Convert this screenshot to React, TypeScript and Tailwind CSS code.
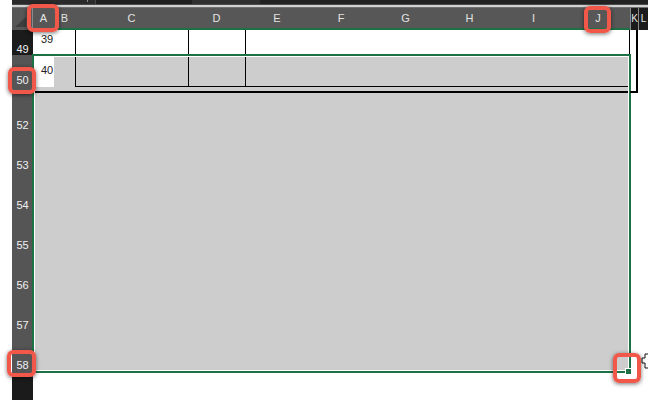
import React from 'react';

const columns = [
  { label: 'A', w: 'w-[21px]' },
  { label: 'B', w: 'w-[21px]' },
  { label: 'C', w: 'w-[113px]' },
  { label: 'D', w: 'w-[57px]' },
  { label: 'E', w: 'w-[64px]' },
  { label: 'F', w: 'w-[64px]' },
  { label: 'G', w: 'w-[65px]' },
  { label: 'H', w: 'w-[63px]' },
  { label: 'I', w: 'w-[65px]' },
  { label: 'J', w: 'w-[64px]' },
];

const tallRows = ['52', '53', '54', '55', '56', '57'];

const Callout = ({ className }: { className: string }) => (
  <div
    className={`absolute border-[4px] border-[#f2584a] rounded-[6px] shadow-[0_1px_4px_rgba(0,0,0,0.55)] ${className}`}
  />
);

const App: React.FC = () => {
  return (
    <div className="relative w-[648px] h-[400px] bg-white flex overflow-hidden font-['Liberation_Sans',Arial,sans-serif]">
      {/* white gutter */}
      <div className="w-[12px] shrink-0" />

      <div className="w-[636px] flex flex-col">
        {/* app top strip */}
        <div className="h-[8px] flex flex-col">
          <div className="h-[4px] flex">
            <div className="w-[83px] bg-[#2a2a2a] flex justify-end pr-[7px]">
              <div className="w-[1px] h-[2px] bg-[#8a8a8a]" />
            </div>
            <div className="w-[1px] bg-[#474747]" />
            <div className="w-[96px] bg-[#1f1f1f]" />
            <div className="w-[68px] bg-[#303030]" />
            <div className="flex-1 bg-[#222]" />
          </div>
          <div className="h-[1px] bg-[#4a4a4a]" />
          <div className="h-[2px] bg-[#d2d2d2]" />
          <div className="h-[1px] bg-[#707070]" />
        </div>

        {/* column headers */}
        <div className="h-[22px] flex text-[11px] leading-none text-[#e4e4e4]">
          <div className="w-[21px] bg-[#575757] border-r border-[#8a8a8a] relative">
            <svg width="20" height="22" className="block">
              <polygon points="3,19 14,19 14,9" fill="#3e3e3e" />
            </svg>
          </div>
          {columns.map((c) => (
            <div
              key={c.label}
              className={`${c.w} bg-[#575757] border-b-2 border-[#1e7145] flex items-center justify-center`}
            >
              {c.label}
            </div>
          ))}
          <div className="w-[8px] bg-[#1b1b1b] border-l border-[#8a8a8a] flex items-center justify-center text-[10px]">
            K
          </div>
          <div className="w-[10px] bg-[#1b1b1b] border-l border-[#8a8a8a] flex items-center justify-center text-[10px]">
            L
          </div>
        </div>

        {/* body */}
        <div className="flex-1 flex">
          {/* row headers */}
          <div className="w-[21px] flex flex-col text-[11px] leading-[12px] text-[#f0f0f0] text-center">
            <div className="h-[25px] bg-[#1b1b1b] pt-[13px]">49</div>
            <div className="h-[50px] bg-[#555555] pt-[19px]">50</div>
            {tallRows.map((r) => (
              <div key={r} className="h-[40px] bg-[#555555] flex items-center justify-center">
                {r}
              </div>
            ))}
            <div className="h-[32px] bg-[#555555] pt-[14px]">58</div>
            <div className="flex-1 bg-[#1b1b1b]" />
          </div>

          {/* cells */}
          <div className="w-[597px] flex flex-col text-[11px] leading-[12px] text-[#222]">
            <div className="h-[24px] flex bg-white">
              <div className="w-[21px] pl-[8px] pt-[3px]">39</div>
              <div className="w-[21px]" />
              <div className="w-[113px] border-l border-black" />
              <div className="w-[57px] border-l border-black" />
              <div className="flex-1 border-l border-r border-black" />
            </div>

            {/* selected range */}
            <div className="-ml-px w-[599px] h-[319px] border-2 border-[#1e7145]">
              <div className="h-full border border-white bg-[#cdcdcd] flex flex-col">
                <div className="h-[30px] flex">
                  <div className="w-[19px] bg-white pl-[6px] pt-[7px]">40</div>
                  <div className="w-[21px]" />
                  <div className="w-[113px] border-l border-b border-black" />
                  <div className="w-[57px] border-l border-b border-black" />
                  <div className="flex-1 border-l border-b border-black" />
                </div>
                <div className="h-[4px]" />
                <div className="h-[2px] bg-black" />
              </div>
            </div>
          </div>

          {/* K / L columns */}
          <div className="w-[18px] flex">
            <div className="w-[8px] h-[63px] border-r-2 border-b-2 border-black" />
          </div>
        </div>
      </div>

      {/* fill handle */}
      <div className="absolute left-[625px] top-[368px] w-[7px] h-[7px] bg-[#1e7145] border border-white" />

      {/* fill cursor */}
      <svg className="absolute left-[640px] top-[353px]" width="16" height="16">
        <polygon
          points="5,1 9,1 9,5 12,5 12,10 9,10 9,15 5,15 5,10 2,10 2,5 5,5"
          fill="#fff"
          stroke="#111"
          strokeWidth="1"
        />
      </svg>

      {/* highlight callouts */}
      <Callout className="left-[27px] top-[4px] w-[32px] h-[28px]" />
      <Callout className="left-[584px] top-[6px] w-[27px] h-[27px]" />
      <Callout className="left-[8px] top-[67px] w-[28px] h-[27px]" />
      <Callout className="left-[7px] top-[350px] w-[29px] h-[27px]" />
      <Callout className="left-[613px] top-[353px] w-[28px] h-[30px]" />
    </div>
  );
};

export default App;
